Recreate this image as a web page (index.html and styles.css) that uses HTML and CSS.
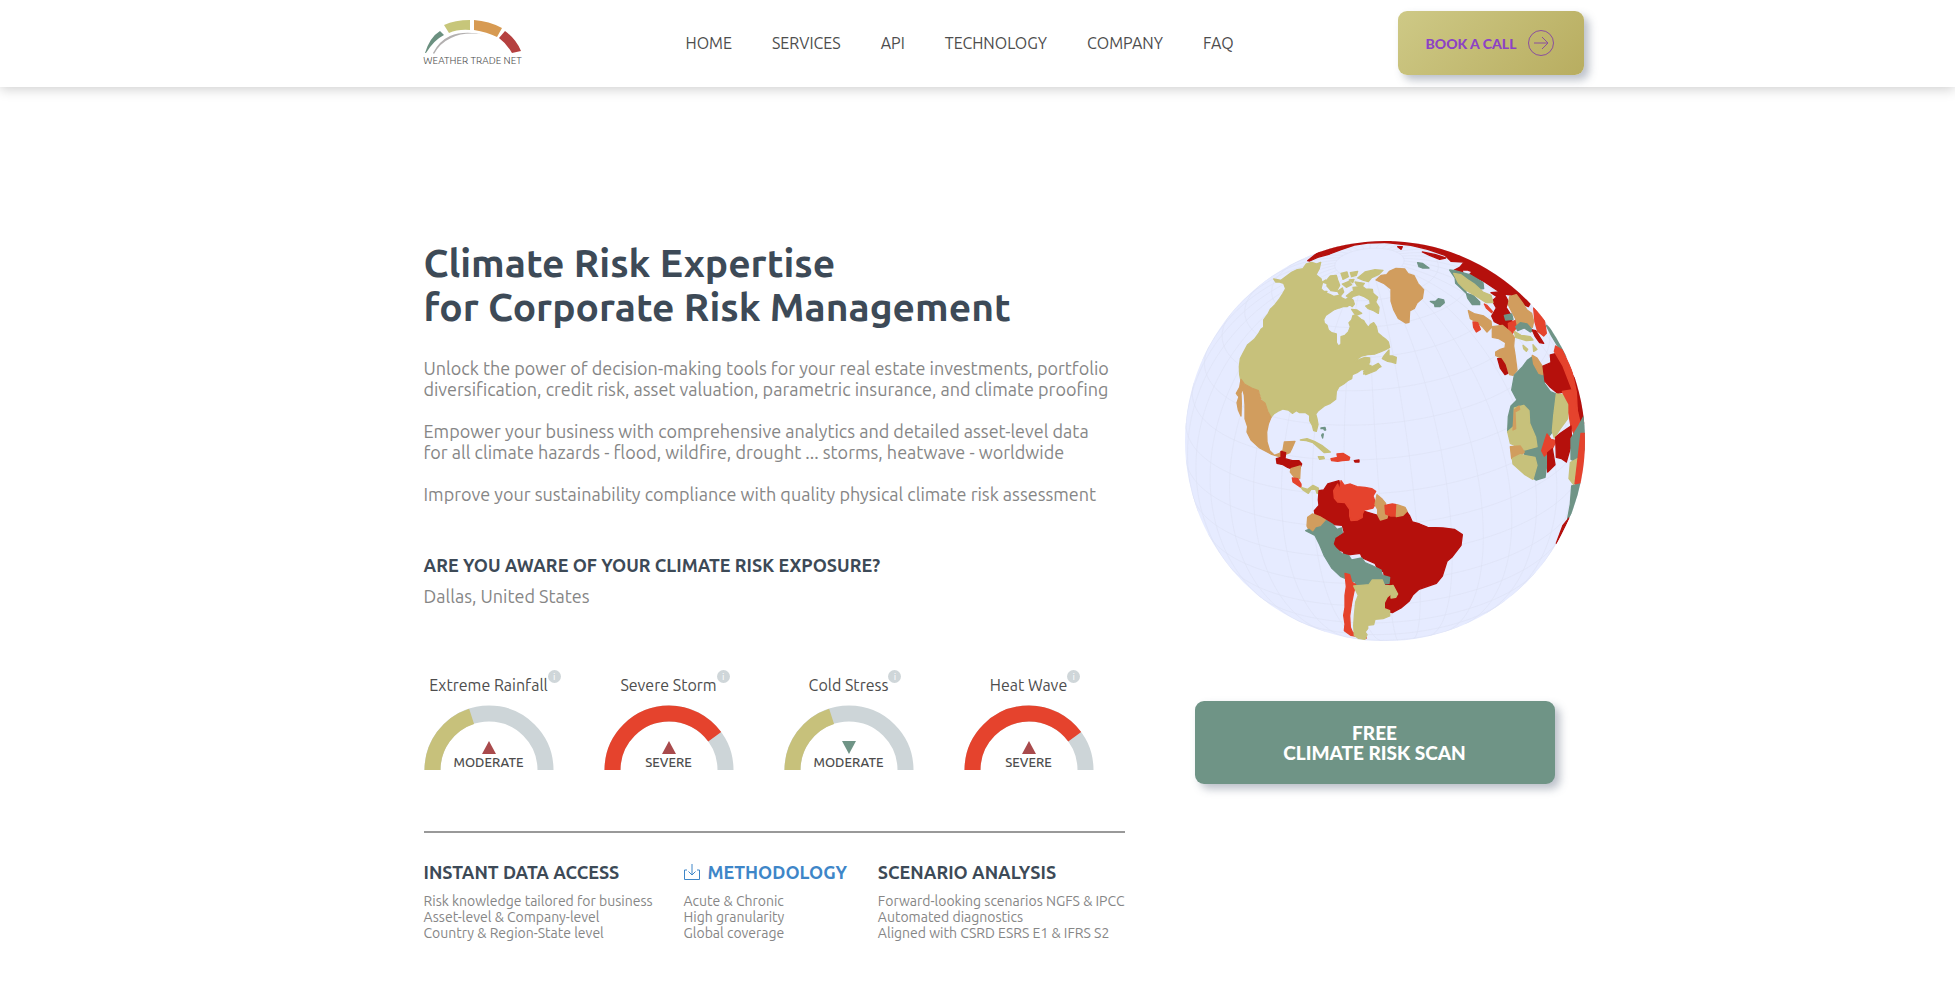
FILE: index.html
```html
<!DOCTYPE html>
<html lang="en">
<head>
    <meta charset="UTF-8">
    <title>Weather Trade Net</title>
    <meta name="viewport" content="width=device-width, initial-scale=1.0">
    <link rel="stylesheet" href="styles.css">
</head>
<body>
    <header class="header">
        <div class="container header-inner">
            <a href="#" class="logo" aria-label="Weather Trade Net">
                <svg viewBox="0 0 98 34" class="logo-arc" aria-hidden="true">
                    <path fill="#6b9080" d="M1 33Q6 17 16 11l4 4Q10 20 2 33z"/>
                    <path fill="#c7c67a" d="M20 5Q31 0 46 0v10Q34 9 25 13z"/>
                    <path fill="#d79a52" d="M50 0q15 1 28 8l-5 9Q63 12 50 10z"/>
                    <path fill="#b5403f" d="M81 11q11 8 16 20l-9 2q-5-9-13-15z"/>
                    <path fill="#b3b0b0" d="M9 33Q15 21 26 16q14-6 36-1-21-4-35 3Q16 23 10 34z"/>
                </svg>
                <span class="logo-text">WEATHER TRADE NET</span>
            </a>
            <nav class="nav">
                <a href="#">HOME</a>
                <a href="#">SERVICES</a>
                <a href="#">API</a>
                <a href="#">TECHNOLOGY</a>
                <a href="#">COMPANY</a>
                <a href="#">FAQ</a>
            </nav>
            <button type="button" class="btn-call">
                BOOK A CALL
                <svg viewBox="0 0 26 26" class="btn-icon" aria-hidden="true">
                    <circle cx="13" cy="13" r="12.5"/>
                    <path d="M6 13h14M14 7l6 6-6 6"/>
                </svg>
            </button>
        </div>
    </header>

    <main class="container hero">
        <section class="intro">
            <h1>Climate Risk Expertise<br>for Corporate Risk Management</h1>
            <p>Unlock the power of decision-making tools for your real estate investments, portfolio<br>diversification, credit risk, asset valuation, parametric insurance, and climate proofing</p>
            <p>Empower your business with comprehensive analytics and detailed asset-level data<br>for all climate hazards - flood, wildfire, drought ... storms, heatwave - worldwide</p>
            <p>Improve your sustainability compliance with quality physical climate risk assessment</p>

            <h2 class="exposure-title">ARE YOU AWARE OF YOUR CLIMATE RISK EXPOSURE?</h2>
            <div class="location">Dallas, United States</div>

            <div class="gauges">
                <div class="gauge">
                    <div class="gauge-label">Extreme Rainfall<span class="info">i</span></div>
                    <div class="gauge-dial">
                        <svg viewBox="0 0 130 65" aria-hidden="true">
                            <path class="track" d="M8.5 65a56.5 56.5 0 0 1 113 0" pathLength="100"/>
                            <path class="moderate" d="M8.5 65a56.5 56.5 0 0 1 113 0" pathLength="100"/>
                            <path class="up" d="M65 36l7 13h-14z"/>
                        </svg>
                        <span class="gauge-value">MODERATE</span>
                    </div>
                </div>
                <div class="gauge">
                    <div class="gauge-label">Severe Storm<span class="info">i</span></div>
                    <div class="gauge-dial">
                        <svg viewBox="0 0 130 65" aria-hidden="true">
                            <path class="track" d="M8.5 65a56.5 56.5 0 0 1 113 0" pathLength="100"/>
                            <path class="severe" d="M8.5 65a56.5 56.5 0 0 1 113 0" pathLength="100"/>
                            <path class="up" d="M65 36l7 13h-14z"/>
                        </svg>
                        <span class="gauge-value">SEVERE</span>
                    </div>
                </div>
                <div class="gauge">
                    <div class="gauge-label">Cold Stress<span class="info">i</span></div>
                    <div class="gauge-dial">
                        <svg viewBox="0 0 130 65" aria-hidden="true">
                            <path class="track" d="M8.5 65a56.5 56.5 0 0 1 113 0" pathLength="100"/>
                            <path class="moderate" d="M8.5 65a56.5 56.5 0 0 1 113 0" pathLength="100"/>
                            <path class="down" d="M58 36h14l-7 13z"/>
                        </svg>
                        <span class="gauge-value">MODERATE</span>
                    </div>
                </div>
                <div class="gauge">
                    <div class="gauge-label">Heat Wave<span class="info">i</span></div>
                    <div class="gauge-dial">
                        <svg viewBox="0 0 130 65" aria-hidden="true">
                            <path class="track" d="M8.5 65a56.5 56.5 0 0 1 113 0" pathLength="100"/>
                            <path class="severe" d="M8.5 65a56.5 56.5 0 0 1 113 0" pathLength="100"/>
                            <path class="up" d="M65 36l7 13h-14z"/>
                        </svg>
                        <span class="gauge-value">SEVERE</span>
                    </div>
                </div>
            </div>

            <div class="features">
                <div class="feature">
                    <h3>INSTANT DATA ACCESS</h3>
                    <p>Risk knowledge tailored for business<br>Asset-level &amp; Company-level<br>Country &amp; Region-State level</p>
                </div>
                <div class="feature">
                    <h3><a href="#" class="download">
                        <svg viewBox="0 0 16 16" aria-hidden="true"><path d="M3 6H.5v9.500h15V6H13M8 0v11M4.500 7.500L8 11l3.500-3.500"/></svg>METHODOLOGY</a></h3>
                    <p>Acute &amp; Chronic<br>High granularity<br>Global coverage</p>
                </div>
                <div class="feature">
                    <h3>SCENARIO ANALYSIS</h3>
                    <p>Forward-looking scenarios NGFS &amp; IPCC<br>Automated diagnostics<br>Aligned with CSRD ESRS E1 &amp; IFRS S2</p>
                </div>
            </div>
        </section>

        <aside class="side">
            <svg class="globe" viewBox="12 33 1200 1200" role="img" aria-label="Climate risk by country">
                <defs>
                    <clipPath id="disc"><circle cx="612" cy="633" r="600"/></clipPath>
                </defs>
                <circle class="ocean" cx="612" cy="633" r="600"/>
                <g clip-path="url(#disc)">
                    <path id="graticule" class="graticule"/>

                    <!-- North America -->
                    <path class="khaki" d="M278 147L300 151 312 142 332 127 346 120 366 116 376 102 392 97 406 102 419 97 415 115 405 134 420 146 424 160 420 176 432 188 446 193 458 199 474 196 484 204 494 209 505 202 516 210 520 222 514 230 506 224 498 230 486 230 474 234 458 240 446 248 434 256 428 268 430 280 438 286 442 300 452 308 466 312 466 338 473 349 480 342 480 320 492 316 502 306 508 290 504 278 512 270 516 256 528 258 540 268 548 272 554 282 562 292 568 284 578 278 586 290 590 308 604 320 614 328 622 336 626 352 612 360 598 366 582 372 560 374 542 378 530 386 520 396 536 388 552 382 566 384 566 396 562 404 574 410 592 400 600 410 580 418 560 428 548 432 552 420 542 418 528 428 514 434 512 446 500 452 488 462 474 470 466 484 464 508 448 520 430 528 412 542 404 552 408 566 411 584 406 604 398 602 394 586 386 572 386 556 374 548 356 548 346 542 334 550 322 540 306 537 290 544 278 552 270 562 262 545 252 520 242 506 236 486 214 478 196 464 180 454 176 434 175 410 178 386 188 366 200 344 220 328 232 312 240 298 248 292 248 270 262 250 268 238 282 224 296 206 306 190 314 176 308 160 296 156 284 156z"/>
                    <path class="khaki" d="M438 150l10-12 18-2 4 14 6 16-10 18-16-2-12-14zM480 130l18-4 4 14-16 8zM484 162l20-8 8 10-16 8zM470 184l14-10 4 12-10 12zM508 128l22-4-4 12-14 4zM505 150l14-2-4 10zM530 144l22-18 30-7 24 2-12 12-22 10-10 12-14-4zM522 156l28 4-6 8-16-2zM516 172l28-3 10 8 20 1 2 12 14 12-6 14 10 16-2 18-14-8-16-6-8-8 14-6-2-12-16-10-16-6-14 4zM496 198l18-14 4 14-10 8zM512 238l16 2 14 10-18 6zM424 156l10-6 2 10zM424 184l14 0-4 8zM604 386l6-10 14-16 0 18 10 0 12 4-2 18-12-4-12-2zM548 424l20-6 28-8-12 12-30 12z"/>
                    <path class="orange" d="M180 448L190 462 212 474 232 482 240 510 252 520 260 544 270 562 262 582 257 606 258 636 266 662 280 676 296 670 306 660 310 636 342 634 334 652 326 668 306 676 302 682 270 672 236 654 210 630 198 606 200 590 192 566 192 524 190 496 184 474 180 490 181 520 180 558 172 540 168 518 174 500 170 496 166 490 176 472z"/>
                    <path class="orange" d="M585 150l16-14 16-2 8-10 20-9 26 2 10 14 18 6 12 24 17 18-4 26-16 14-8 16-14 8-2 34-10 2-22-14-14-26-8-26 0-36-20-16z"/>
                    <path class="green" d="M420 594l12-2 2 8-4 0-2-4-8 0zM424 612l3 0-2 12-3-8z"/>
                    <g transform="translate(0 630)">
                        <path class="dark" d="M286 56l14-4 0-18 14 4-2 18 22 6 20 0 8 10-6 14-26 0-10-4-14-8-18-4z"/>
                        <path class="orange" d="M330 86l28-8-2 38-14-2-14-18z"/>
                        <path class="light" d="M334 114l16 2 10 16 0 10-12-8-12-8z"/>
                        <path class="khaki" d="M360 142l20 6 16-12 16 8 2 16-6 0-4-12-14 0-8 12-16-10z"/>
                        <path class="khaki" d="M358 0l20-4 22 8 22 12 26 20-18 2-16-14-18-16-20-6zM412 50l16 0 2 6-14 2z"/>
                        <path class="light" d="M450 56l20-4-2-10 18-2 20 12-2 8-20 2-14 2-18-2z"/>
                        <path class="dark" d="M520 62l14-2 0 6-12 0z"/>

                        <!-- South America -->
                        <path class="dark" d="M474 122L440 132 428 150 414 152 412 180 414 196 400 212 402 222 436 240 458 254 484 256 490 278 470 290 454 296 450 312 464 328 486 334 490 346 538 340 544 354 582 370 590 388 608 396 614 438 630 436 632 444 628 456 612 482 608 512 634 518 660 504 684 484 696 464 714 448 766 430 784 408 798 364 814 350 840 316 844 284 820 268 786 264 740 262 716 252 694 246 686 228 672 208 640 216 590 226 550 214 500 190 478 150z"/>
                        <path class="khaki" d="M630 438l6-2 14 26-6 10-14 2z"/>
                        <path class="light" d="M470 132l6 20 4-30 10 14 18-4 20 8 24 2 20 4 12 8-8 14 8 22-8 14-26 6-6 12 0 10-14 8-20 2-4-14 0-20-14-20-22-2-10-12-2-22z"/>
                        <path class="orange" d="M588 164l16 14 10 12-2 14 10 16-4 14-20 6-8-16 0-16-8-14z"/>
                        <path class="light" d="M612 196l22-4 12 2 4 34-22 0-14-6z"/>
                        <path class="orange" d="M648 194l24 8 6 12-12 12-20 4z"/>
                        <path class="orange" d="M380 232l14-10 22 8 20 12-14 16-14 4-10 14-14-6-6-12z"/>
                        <path class="green" d="M374 272l10-4 12 10 10-14 14-4 16-18 20 12 12 14 14-4 2 14-22 14-6 20 8 12 20 18 20 6 8 12 30-6 10 14 24 10 24 12 4 16 22 6-2 18-32 4-12 16-28 2-16 4-12-16 0-14-10-2-34-14-28-26-22-36-14-34-14-28z"/>
                        <path class="light" d="M492 400l14 4 6 22 12 8-6 24-6 30-6 40 2 34 6 14 14 10 24 4 4 4-24-4-22-4-20-14 2-20-4-26 4-24 0-36 4-26z"/>
                        <path class="khaki" d="M518 438l22-2 24-2 10-14 30 0 6 16 22 2 4 18-18 16-8 16 0 18 16 6 0 16-20 8-24 2-4 16-18 2 0 10-8 10 6 8-6 14-18-2-14-10-2-28 2-32 4-40 8-20z"/>
                    </g>

                    <!-- Arctic and Europe -->
                    <path class="dark" d="M380 92L420 60 520 34 630 28 630 37 560 39 520 45 480 59 446 72 410 82 386 93z"/>
                    <g transform="translate(630 0)">
                        <path class="dark" d="M-20 25L170 20 430 200 412 230 385 218 362 195 340 192 352 215 345 232 360 255 366 300 354 310 340 290 310 275 302 258 316 234 304 212 318 200 300 188 326 186 280 155 240 136 214 130 194 128 190 120 206 112 220 96 180 94 162 76 110 58 60 46 -20 37z"/>
                        <path class="dark" d="M94 66l40 8 30 10-18 4-30-12zM20 50l14 0-4 8z"/>
                        <path class="ocean" d="M216 122l14 0 10 4-8 8-14-4z"/>
                        <path class="green" d="M176 120l16 2 44 12 40 24 2 18-16 2-20-14-28-20-22-4 2 20 32 30 20 6 20 20 0 8-22 0-14-20-6-22-26-30zM80 98l14 2 20 14-20 0-10-4zM118 214l16 0 8-8 16 4 2 8-14 12-14 0-2-8z"/>
                        <path class="khaki" d="M188 130l22 4 24 18 18 12 24 22 24 10 6 22-20 0-28-18-34-20-22-22z"/>
                        <path class="orange" d="M232 242l20 10 26 6 22 16 2 18-14 14-12-14-16-14-22-12zM356 200l20-6 18 24 14 22 14 10 6 24-4 18-22-4-14-8-14 6 0-20-12-22-10-20z"/>
                        <path class="light" d="M246 276l14 2 8 20-12 8-8-14zM280 222l8 4 16 18-2 4-16-14zM352 280l20-8 4 20-12 18-10-6zM428 234l18 14 14 22 6 40-8 8-18-14-8-28z"/>
                        <path class="green" d="M340 256l22-4 4 16-22 2zM374 290l14-12 20 4 18 20-8 4-18-12-20 8zM466 286l20 16 26 40 18 40-30-34-18-30z"/>
                        <path class="orange" d="M304 290l30-4 24 20 12 16-2 26 4 26 6 46-12 16-10-2-12-28-16-22-14-8 0-10 14-8 14-4 2-16-20-12-20-4z"/>
                        <path class="khaki" d="M370 304l20 12 28 4 8 10-20 2-32-10zM396 346l14 12-4 6-8-8zM426 344l12 14-10 6z"/>
                        <path class="dark" d="M320 386l10 0 12 18 8 26-8 4-14-20zM424 300l10 2 14 22 10 16-12-2-14-20z"/>

                        <!-- Africa -->
                        <path class="green" d="M425 380L458 430 460 460 478 485 496 492 486 558 488 600 465 630 468 700 462 742 435 750 400 725 400 640 350 605 352 560 360 528 378 510 362 480 370 436 395 410 410 390z"/>
                        <path class="orange" d="M424 376l14 8 18 28 0 22-12-4-16-28z"/>
                        <path class="dark" d="M456 408L480 398 478 375 496 370 524 408 540 430 580 480 590 570 570 590 556 520 542 480 500 490 478 472 462 454z"/>
                        <path class="light" d="M494 348l20 12 28 60 14 66 4 80-16-86-28-72-26-44z"/>
                        <path class="light" d="M514 484L542 480 554 520 570 590 556 628 540 590 530 530z"/>
                        <path class="khaki" d="M370 534L398 526 414 542 416 580 434 622 438 650 400 660 358 640 350 605 370 588zM496 492l18 2 16 30 0 42-22 30-18 28-6-20 4-46z"/>
                        <path class="orange" d="M358 650l30-2 12 18-20 20-18 0zM370 540l14-12 2 10-14 8 2 50-8 4z"/>
                        <path class="khaki" d="M364 686l24-12 44 8 6 24-12 42-24-14-36-32z"/>
                        <path class="light" d="M462 630l6-18 12 16 16 4-12 24-24 22-8-16z"/>
                        <path class="dark" d="M470 668l14-12 8 48-22 22zM494 622L508 610 540 588 542 640 526 696 512 686 496 682z"/>
                        <path class="green" d="M540 626l24-40 16-30 8 90-30 50-18-8z"/>
                        <path class="khaki" d="M538 698l22-12 6 44-18 34-14-18z"/>
                        <path class="light" d="M570 610l20 0-6 130-22 26-10-4z"/>
                        <path class="green" d="M542 768l34-8-26 80-20 26 8-44z"/>
                        <path class="dark" d="M516 886l18-22-38 76z"/>
                    </g>
                </g>
            </svg>
            <button type="button" class="btn-scan">FREE<br>CLIMATE RISK SCAN</button>
        </aside>
    </main>

    <script src="script.js"></script>
</body>
</html>
```
FILE: styles.css
```css
:root {
    --text-dark: #3d4a57;
    --text-grey: #868686;
    --green: #6f9486;
    --khaki: #c7c17b;
    --orange: #d19d5e;
    --red: #e5432d;
    --dark-red: #b5100c;
}

* {
    box-sizing: border-box;
}

body {
    margin: 0;
    background: #fff;
    color: #4d4d4d;
    font-family: Ubuntu, "Noto Sans", "Open Sans", sans-serif;
    font-size: 16px;
}

h1, h2, h3, p {
    margin: 0;
}

a {
    color: inherit;
    text-decoration: none;
}

button {
    border: none;
    border-radius: 9px;
    font-family: Lato, sans-serif;
    font-weight: 900;
    cursor: pointer;
    box-shadow: 5px 5px 9px rgba(61, 74, 100, 0.35);
}

.container {
    max-width: 1214px;
    margin: 0 auto;
    padding-left: 53px;
}

/* header */
.header {
    box-shadow: 0 2px 12px rgba(0, 0, 0, 0.2);
}

.header-inner {
    display: flex;
    align-items: center;
    justify-content: space-between;
    padding-top: 11px;
    padding-bottom: 12px;
}

.logo {
    display: flex;
    flex-direction: column;
    align-items: center;
    width: 98px;
    padding-top: 2px;
}

.logo-arc {
    display: block;
    width: 98px;
}

.logo-text {
    font-size: 10px;
    font-weight: 300;
    line-height: 14px;
    white-space: nowrap;
}

.nav {
    display: flex;
    gap: 40px;
}

.btn-call {
    display: flex;
    align-items: center;
    gap: 12px;
    height: 64px;
    padding: 0 30px 0 28px;
    background: linear-gradient(135deg, #cec986, #b8ad60);
    color: #8d42c5;
    font-size: 14px;
}

.btn-icon {
    width: 26px;
    fill: none;
    stroke: #8a4f9e;
}

/* hero */
.hero {
    display: grid;
    grid-template-columns: 701px 400px;
    justify-content: space-between;
    padding-top: 154px;
    padding-bottom: 60px;
}

h1 {
    margin-bottom: 29px;
    color: var(--text-dark);
    font-size: 39px;
    line-height: 44px;
}

.intro p {
    margin-bottom: 21px;
    color: var(--text-grey);
    font-size: 18px;
    line-height: 21px;
    white-space: nowrap;
}

.exposure-title {
    margin-top: 50px;
    color: var(--text-dark);
    font-size: 18px;
    line-height: 21px;
}

.location {
    margin-top: 10px;
    color: var(--text-grey);
    font-size: 18px;
    line-height: 21px;
}

.gauges {
    display: flex;
    gap: 50px;
    padding: 68px 0 61px;
    border-bottom: 2px solid #999;
}

.gauge {
    width: 130px;
    text-align: center;
}

.gauge-label {
    position: relative;
    width: max-content;
    margin: 0 auto 10px;
    font-size: 16px;
    line-height: 20px;
}

.info {
    position: absolute;
    top: -5px;
    left: 100%;
    width: 13px;
    height: 13px;
    border-radius: 50%;
    background: #cfd6d9;
    color: #fff;
    font-size: 10px;
    line-height: 13px;
}

.gauge-dial {
    position: relative;
}

.gauge-dial svg {
    display: block;
    width: 100%;
}

.gauge-value {
    position: absolute;
    right: 0;
    bottom: 0;
    left: 0;
    font-size: 13px;
    font-weight: 500;
    line-height: 16px;
}

.track, .moderate, .severe {
    fill: none;
    stroke: #cdd5d8;
    stroke-width: 16;
}

.gauge-dial .moderate {
    stroke: var(--khaki);
    stroke-dasharray: 40 100;
}

.gauge-dial .severe {
    stroke: var(--red);
    stroke-dasharray: 80 100;
}

.up {
    fill: #a94a4c;
}

.down {
    fill: var(--green);
}

/* features */
.features {
    display: flex;
    justify-content: space-between;
    padding-top: 27px;
}

.feature h3 {
    margin-bottom: 9px;
    color: var(--text-dark);
    font-size: 18px;
    line-height: 24px;
}

.feature p {
    margin: 0;
    font-size: 14px;
    line-height: 16px;
}

.download {
    display: flex;
    align-items: center;
    gap: 8px;
    color: #3e86c8;
}

.download svg {
    width: 16px;
    fill: none;
    stroke: currentColor;
}

/* globe */
.side {
    display: flex;
    flex-direction: column;
}

.globe {
    display: block;
    width: 100%;
    stroke-width: 4;
    stroke-linejoin: round;
}

.ocean {
    fill: #e6ebff;
}

.graticule {
    fill: none;
    stroke: #dee3f4;
    stroke-width: 2;
}

.khaki {
    fill: var(--khaki);
    stroke: var(--khaki);
}

.orange {
    fill: var(--orange);
    stroke: var(--orange);
}

.green {
    fill: var(--green);
    stroke: var(--green);
}

.light {
    fill: var(--red);
    stroke: var(--red);
}

.dark {
    fill: var(--dark-red);
    stroke: var(--dark-red);
}

.btn-scan {
    width: 360px;
    height: 83px;
    margin: 60px 0 0 10px;
    background: var(--green);
    color: #fff;
    font-size: 19px;
    line-height: 20px;
}
```
FILE: script.js
```js
// orthographic projection of the 10 degree grid
const R = 600, CX = 612, CY = 633;
const RAD = Math.PI / 180;
const LAT0 = 25 * RAD, LON0 = -57 * RAD, ROLL = 5 * RAD;

function project(lon, lat) {
    const l = lon * RAD - LON0, p = lat * RAD;
    const depth = Math.sin(LAT0) * Math.sin(p) + Math.cos(LAT0) * Math.cos(p) * Math.cos(l);
    if (depth < 0) return null;
    const x = Math.cos(p) * Math.sin(l);
    const y = Math.cos(LAT0) * Math.sin(p) - Math.sin(LAT0) * Math.cos(p) * Math.cos(l);
    return [
        CX + R * (x * Math.cos(ROLL) - y * Math.sin(ROLL)),
        CY - R * (x * Math.sin(ROLL) + y * Math.cos(ROLL))
    ];
}

function line(points) {
    let d = '', pen = false;
    points.forEach(([lon, lat]) => {
        const p = project(lon, lat);
        if (p) d += (pen ? 'L' : 'M') + p[0].toFixed(1) + ' ' + p[1].toFixed(1);
        pen = !!p;
    });
    return d;
}

let d = '';
for (let lon = -180; lon < 180; lon += 10) {
    const pts = [];
    for (let lat = -80; lat <= 80; lat += 2) pts.push([lon, lat]);
    d += line(pts);
}
for (let lat = -80; lat <= 80; lat += 10) {
    const pts = [];
    for (let lon = -180; lon <= 180; lon += 2) pts.push([lon, lat]);
    d += line(pts);
}
document.getElementById('graticule').setAttribute('d', d);
```
